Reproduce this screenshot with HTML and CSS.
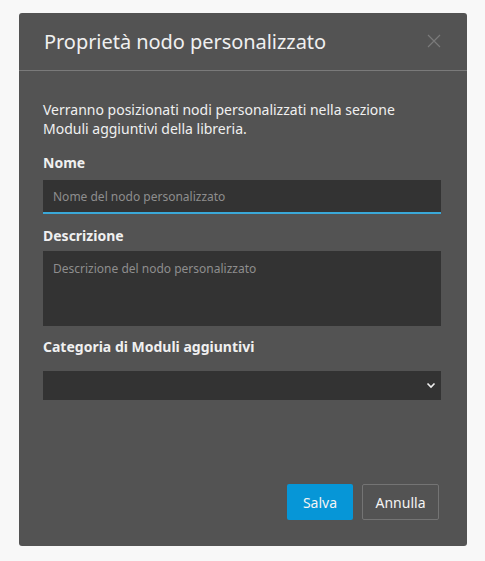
FILE: index.html
```html
<!DOCTYPE html>
<html lang="it">
<head>
<meta charset="utf-8">
<title>Proprietà nodo personalizzato</title>
<link rel="stylesheet" href="styles.css">
</head>
<body>
<div class="dialog">
  <div class="header">
    <h1 class="title">Proprietà nodo personalizzato</h1>
    <span class="close">
      <svg width="14" height="14" viewBox="0 0 14 14"><path d="M1 1L13 13M13 1L1 13" stroke="#7a7a7a" stroke-width="1.2" fill="none"/></svg>
    </span>
  </div>
  <div class="content">
    <p class="intro">Verranno posizionati nodi personalizzati nella sezione Moduli aggiuntivi della libreria.</p>
    <label class="label l-name">Nome</label>
    <div class="input"><span class="ph">Nome del nodo personalizzato</span></div>
    <label class="label l-desc">Descrizione</label>
    <div class="textarea"><span class="ph">Descrizione del nodo personalizzato</span></div>
    <label class="label l-cat">Categoria di Moduli aggiuntivi</label>
    <div class="select">
      <svg width="10" height="7" viewBox="0 0 10 7"><path d="M1.5 1.5L5 5L8.5 1.5" stroke="#f0f0f0" stroke-width="1.6" fill="none"/></svg>
    </div>
  </div>
  <div class="footer">
    <button class="btn primary">Salva</button>
    <button class="btn secondary">Annulla</button>
  </div>
</div>
</body>
</html>
```
FILE: styles.css
```css
html, body {
  margin: 0;
  padding: 0;
  background: #f8f8f8;
}
body {
  font-family: "Noto Sans", "Open Sans", sans-serif;
  color: #eeeeee;
}
.dialog {
  margin: 13px 0 0 19px;
  width: 448px;
  height: 533px;
  background: #535353;
  border-radius: 3px;
  display: flex;
  flex-direction: column;
  box-sizing: border-box;
}
.header {
  height: 58px;
  box-sizing: border-box;
  border-bottom: 1px solid #7a7a7a;
  display: flex;
  align-items: center;
  justify-content: space-between;
  padding: 0 26px 0 25px;
}
.title {
  margin: 0;
  font-size: 20px;
  font-weight: 400;
  color: #f0f0f0;
  letter-spacing: -0.05px;
}
.close {
  display: flex;
  padding-bottom: 1px;
}
.content {
  padding: 29px 26px 0 24px;
  display: flex;
  flex-direction: column;
  flex: 1;
}
.intro {
  margin: 0;
  font-size: 14px;
  line-height: 19px;
  color: #f0f0f0;
}
.label {
  font-size: 14px;
  font-weight: 700;
  line-height: 19px;
  color: #f0f0f0;
}
.l-name { margin-top: 15px; margin-bottom: 8px; }
.l-desc { margin-top: 12px; margin-bottom: 6px; }
.l-cat { margin-top: 11px; margin-bottom: 15px; }
.input {
  height: 34px;
  background: #333333;
  border-bottom: 2px solid #3aa8d8;
  box-sizing: border-box;
  display: flex;
  align-items: center;
  padding: 0 10px;
}
.ph {
  font-size: 12px;
  color: #8e8e8e;
}
.textarea {
  height: 75px;
  background: #333333;
  box-sizing: border-box;
  padding: 8px 10px;
  line-height: 17px;
}
.select {
  height: 29px;
  background: #333333;
  box-sizing: border-box;
  display: flex;
  align-items: center;
  justify-content: flex-end;
  padding-right: 5px;
}
.footer {
  display: flex;
  justify-content: flex-end;
  gap: 9px;
  padding: 0 28px 26px 0;
}
.btn {
  font-family: "Noto Sans", "Open Sans", sans-serif;
  font-size: 14px;
  height: 36px;
  border-radius: 2px;
  padding: 0;
  color: #f4f4f4;
  cursor: pointer;
}
.primary {
  width: 66px;
  background: #0696d7;
  border: none;
}
.secondary {
  width: 77px;
  background: transparent;
  border: 1px solid #747474;
}
```
